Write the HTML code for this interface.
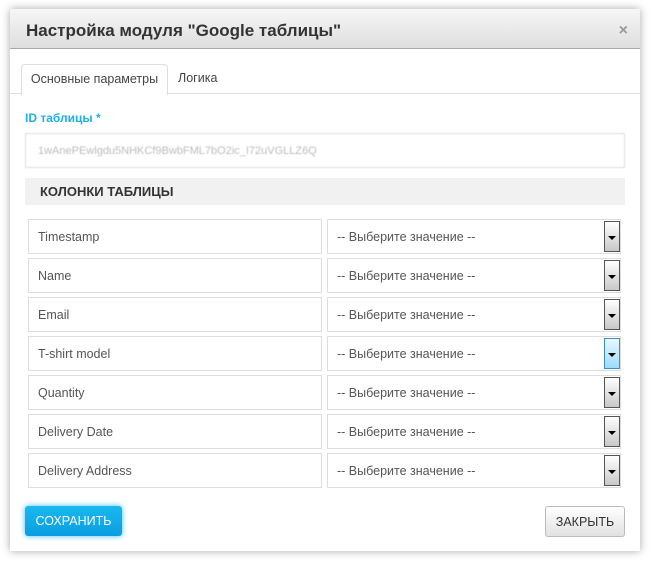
<!DOCTYPE html>
<html><head><meta charset="utf-8"><style>
body{margin:0;width:652px;height:563px;background:#fff;font-family:"Liberation Sans",sans-serif;position:relative;overflow:hidden}
.dlg{position:absolute;left:10px;top:9px;width:630px;height:542px;background:#fff;box-shadow:0 0 8px rgba(0,0,0,.35)}
.hd{position:absolute;left:0;top:0;width:630px;height:39px;background:linear-gradient(#f6f6f6,#dedede);border-bottom:1px solid #a8a8a8}
.hd .t{position:absolute;left:16px;top:12px;font-size:17px;font-weight:bold;color:#333}
.hd .x{position:absolute;right:12px;top:13px;font-size:16px;font-weight:bold;color:#999}
.tabs{position:absolute;left:0;top:84px;width:630px;border-top:1px solid #ddd}
.tab1{position:absolute;left:11px;top:55px;width:145px;height:30px;border:1px solid #ddd;border-bottom:none;border-radius:4px 4px 0 0;background:#fff;font-size:12.5px;color:#444;line-height:28px;text-align:center;z-index:2}
.tab2{position:absolute;left:168px;top:55px;font-size:12.5px;color:#444;line-height:28px}
.lbl{position:absolute;left:15px;top:102px;font-size:12px;font-weight:bold;color:#1ab0e8}
.inp{position:absolute;left:15px;top:124px;width:598px;height:33px;border:1px solid #ddd;font-size:11px;color:#bbb;line-height:35px;text-indent:12px;filter:blur(.6px)}
.sec{position:absolute;left:15px;top:169px;width:600px;height:27px;background:#f1f1f1;font-size:13px;font-weight:bold;color:#333;line-height:28px;text-indent:15px}
.f{position:absolute;height:33px;border:1px solid #ddd;font-size:12.5px;color:#555;line-height:35px;text-indent:9px}
.l{left:18px;width:292px}.r{left:317px;width:292px}
.ar{position:absolute;right:0;top:1px;width:14px;height:29px;border:1px solid #555;background:linear-gradient(#fff,#c8c8c8)}
.ar:after{content:"";position:absolute;left:3px;top:14px;border-left:4px solid transparent;border-right:4px solid transparent;border-top:4px solid #000}
.ar.b{border-color:#3a8fc8;background:linear-gradient(#e8f8ff,#9ddcfb)}
.btn{position:absolute;top:497px;height:30px;font-size:12.5px;line-height:31px;text-align:center;border-radius:3px}
.sv{left:15px;width:97px;background:linear-gradient(#1ab8f0,#0a9ee0);color:#fff;box-shadow:0 0 6px #3cc0f5}
.cl{left:535px;width:78px;border:1px solid #bbb;background:linear-gradient(#fff,#e2e2e2);color:#333;height:29px}
</style></head><body>
<div class="dlg">
<div class="hd"><div class="t">Настройка модуля "Google таблицы"</div><div class="x">×</div></div>
<div class="tabs"></div>
<div class="tab1">Основные параметры</div><div class="tab2">Логика</div>
<div class="lbl">ID таблицы *</div>
<div class="inp">1wAnePEwlgdu5NHKCf9BwbFML7bO2ic_I72uVGLLZ6Q</div>
<div class="sec">КОЛОНКИ ТАБЛИЦЫ</div>

<div class="f l" style="top:210px">Timestamp</div><div class="f r" style="top:210px">-- Выберите значение --<div class="ar"></div></div>
<div class="f l" style="top:249px">Name</div><div class="f r" style="top:249px">-- Выберите значение --<div class="ar"></div></div>
<div class="f l" style="top:288px">Email</div><div class="f r" style="top:288px">-- Выберите значение --<div class="ar"></div></div>
<div class="f l" style="top:327px">T-shirt model</div><div class="f r" style="top:327px">-- Выберите значение --<div class="ar b"></div></div>
<div class="f l" style="top:366px">Quantity</div><div class="f r" style="top:366px">-- Выберите значение --<div class="ar"></div></div>
<div class="f l" style="top:405px">Delivery Date</div><div class="f r" style="top:405px">-- Выберите значение --<div class="ar"></div></div>
<div class="f l" style="top:444px">Delivery Address</div><div class="f r" style="top:444px">-- Выберите значение --<div class="ar"></div></div>

<div class="btn sv">СОХРАНИТЬ</div>
<div class="btn cl">ЗАКРЫТЬ</div>
</div>
</body></html>
